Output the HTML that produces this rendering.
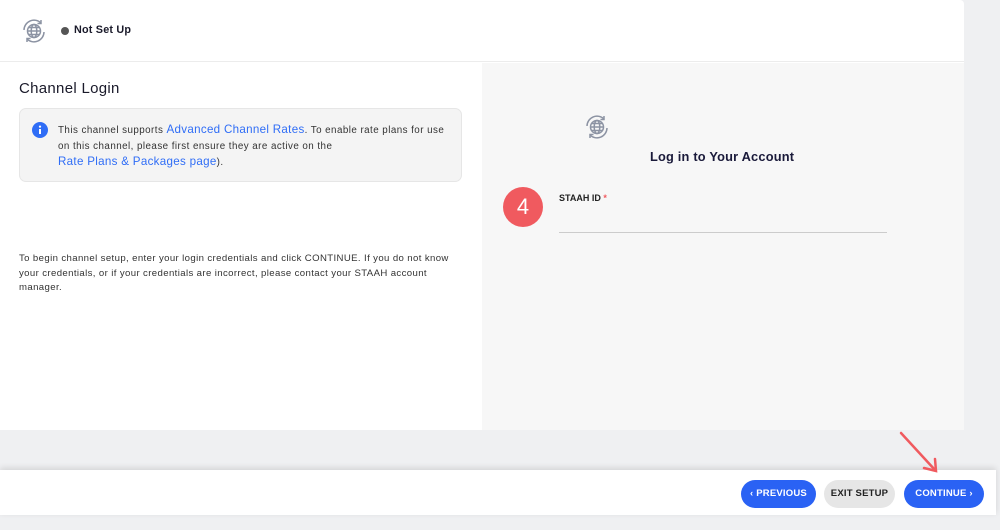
<!DOCTYPE html>
<html><head><meta charset="utf-8"><style>
*{margin:0;padding:0;box-sizing:border-box}
body{width:1000px;height:530px;background:#eff0f2;font-family:"Liberation Sans",sans-serif;position:relative;overflow:hidden;color:#222}
.card{position:absolute;left:0;top:0;width:964px;height:430px;background:#fff;border-radius:0 4px 4px 0}
.hdr{position:absolute;left:0;top:0;width:964px;height:62px;border-bottom:1px solid #ececec}
.right{position:absolute;left:482px;top:63px;width:482px;height:367px;background:#f7f7f7}
.abs{position:absolute}
.info{position:absolute;left:19px;top:108px;width:443px;height:74px;background:#f4f4f4;border:1px solid #e6e6e6;border-radius:7px}
.info p{position:absolute;left:38px;top:13px;font-size:9.8px;line-height:15.5px;color:#333;width:400px;letter-spacing:.45px;white-space:nowrap}
.lk{color:#2f6df6;font-size:11.6px;letter-spacing:.3px}
.foot{position:absolute;left:0;top:470px;width:996px;height:45px;background:#fff;box-shadow:0 -2px 6px rgba(0,0,0,.12)}
.btn{position:absolute;top:480px;height:28px;border-radius:14px;font-size:9.5px;font-weight:bold;line-height:28px;text-align:center;letter-spacing:.2px}
</style></head><body>
<div class="card">
<div class="hdr"></div>
<div class="right"></div>
</div>
<svg class="abs" style="left:20px;top:17px" width="28" height="28" viewBox="0 0 28 28" fill="none" stroke="#8c93a3" stroke-width="1.5"><circle cx="14" cy="14" r="6.5"/><ellipse cx="14" cy="14" rx="2.8" ry="6.5"/><path d="M7.5 14h13M8.5 10.5h11M8.5 17.5h11"/><path d="M4 13a10 10 0 0 1 17-7"/><path d="M24 15a10 10 0 0 1-17 7"/><path d="M21 3v3.5h-3.5M7 25v-3.5h3.5"/></svg>
<div class="abs" style="left:61px;top:27px;width:8px;height:8px;border-radius:50%;background:#555"></div>
<div class="abs" style="left:74px;top:24px;font-size:10.8px;font-weight:bold;color:#1a1a2a;letter-spacing:.2px">Not Set Up</div>
<div class="abs" style="left:19px;top:80px;font-size:15px;color:#1a1a2a;letter-spacing:.3px">Channel Login</div>
<div class="info">
<svg class="abs" style="left:12px;top:13px" width="16" height="16" viewBox="0 0 16 16"><circle cx="8" cy="8" r="8" fill="#2f6df6"/><rect x="7" y="7" width="2" height="5" fill="#fff"/><circle cx="8" cy="4.6" r="1.1" fill="#fff"/></svg>
<p>This channel supports <span class="lk">Advanced Channel Rates</span>. To enable rate plans for use<br>on this channel, please first ensure they are active on the<br><span class="lk">Rate Plans &amp; Packages page</span>).</p>
</div>
<div class="abs" style="left:19px;top:252px;width:450px;font-size:9.6px;line-height:14.7px;color:#333;letter-spacing:.38px;white-space:nowrap">To begin channel setup, enter your login credentials and click CONTINUE. If you do not know<br>your credentials, or if your credentials are incorrect, please contact your STAAH account<br>manager.</div>
<svg class="abs" style="left:583px;top:113px" width="28" height="28" viewBox="0 0 28 28" fill="none" stroke="#8c93a3" stroke-width="1.5"><circle cx="14" cy="14" r="6.5"/><ellipse cx="14" cy="14" rx="2.8" ry="6.5"/><path d="M7.5 14h13M8.5 10.5h11M8.5 17.5h11"/><path d="M4 13a10 10 0 0 1 17-7"/><path d="M24 15a10 10 0 0 1-17 7"/><path d="M21 3v3.5h-3.5M7 25v-3.5h3.5"/></svg>
<div class="abs" style="left:650px;top:149px;font-size:12.8px;font-weight:bold;color:#1a1a3a;letter-spacing:.2px">Log in to Your Account</div>
<div class="abs" style="left:503px;top:187px;width:40px;height:40px;border-radius:50%;background:#f05a5f;color:#fff;font-size:22px;text-align:center;line-height:40px">4</div>
<div class="abs" style="left:559px;top:193px;font-size:9px;font-weight:bold;color:#222">STAAH ID <span style="color:#f05a5f">*</span></div>
<div class="abs" style="left:559px;top:232px;width:328px;height:1px;background:#ccc"></div>
<div class="foot"></div>
<div class="btn" style="left:741px;width:75px;background:#2a62f4;color:#fff">&lsaquo; PREVIOUS</div>
<div class="btn" style="left:824px;width:71px;background:#e6e6e6;color:#222">EXIT SETUP</div>
<div class="btn" style="left:904px;width:80px;background:#2a62f4;color:#fff">CONTINUE &rsaquo;</div>
<svg class="abs" style="left:895px;top:430px" width="48" height="45" viewBox="0 0 48 45"><path d="M6 3L40 40" stroke="#f05a5f" stroke-width="2.5" stroke-linecap="round"/><path d="M29 38L41 41L40 29" fill="none" stroke="#f05a5f" stroke-width="2.5" stroke-linecap="round"/></svg>
</body></html>
